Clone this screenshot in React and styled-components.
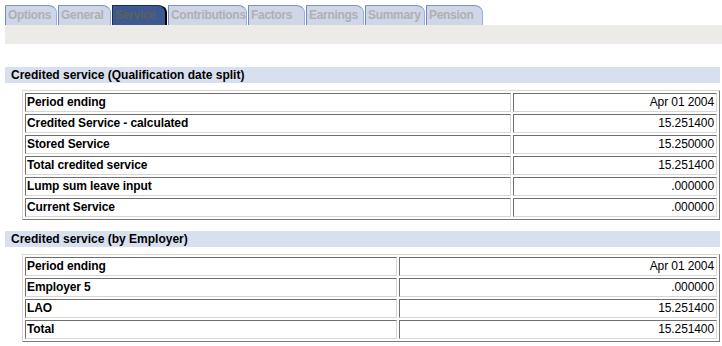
import React from "react";
import styled, { createGlobalStyle } from "styled-components";

const Global = createGlobalStyle`
  html, body { margin: 0; padding: 0; background: #fff; }
  body { font-family: Arial, "Liberation Sans", sans-serif; font-size: 12px; color: #000; }
`;

const Page = styled.div`
  width: 722px;
  padding: 4px 0 0 5px;
  box-sizing: border-box;
`;

const TabRow = styled.div`
  display: flex;
  height: 21px;
  align-items: flex-end;
`;

const Tab = styled.div`
  width: ${p => p.$w}px;
  height: 20px;
  box-sizing: border-box;
  padding-left: 2px;
  margin-right: 1px;
  overflow: hidden;
  background: ${p => (p.$active ? "#3c5a90" : "#ced6e8")};
  border-left: 1px solid ${p => (p.$active ? "#1d2d4d" : "#6d88c4")};
  border-top: 1px solid ${p => (p.$active ? "#1d2d4d" : "#7b93c8")};
  border-right: ${p => (p.$active ? "2px solid #000" : "1px solid #9aaedb")};
  border-top-right-radius: 9px 7px;
  color: ${p => (p.$active ? "#5f5f5f" : "#b0b0b0")};
  font-weight: bold;
  font-size: 12px;
  letter-spacing: -0.3px;
  line-height: 19px;
  white-space: nowrap;
`;

const GrayBar = styled.div`
  height: 19px;
  background: #ecebe7;
`;

const SectionHeader = styled.div`
  margin-top: ${p => p.$mt}px;
  width: 715px;
  height: 16px;
  background: #d8dfee;
  font-weight: bold;
  font-size: 12px;
  line-height: 16px;
  padding-left: 6px;
  box-sizing: border-box;
`;

const Table = styled.table`
  margin: 7px 0 0 17px;
  width: 698px;
  border-collapse: separate;
  border-spacing: 2px;
  border-top: 1px solid #d8d6d0;
  border-left: 1px solid #d8d6d0;
  border-right: 1px solid #7a7a7a;
  border-bottom: 1px solid #7a7a7a;
`;

const Cell = styled.td`
  height: 19px;
  padding: 0 2px 0 1px;
  border-top: 1px solid #6e6e6e;
  border-left: 1px solid #6e6e6e;
  border-right: 1px solid #d8d6d0;
  border-bottom: 1px solid #d8d6d0;
  font-size: 12px;
  line-height: 17px;
  letter-spacing: -0.1px;
  font-weight: ${p => (p.$label ? "bold" : "normal")};
  text-align: ${p => (p.$label ? "left" : "right")};
  width: ${p => p.$w}px;
  box-sizing: border-box;
`;

const tabs = [
  ["Options", 52],
  ["General", 53],
  ["Service", 55],
  ["Contributions", 79],
  ["Factors", 57],
  ["Earnings", 58],
  ["Summary", 60],
  ["Pension", 57],
];

const qual = [
  ["Period ending", "Apr 01 2004"],
  ["Credited Service - calculated", "15.251400"],
  ["Stored Service", "15.250000"],
  ["Total credited service", "15.251400"],
  ["Lump sum leave input", ".000000"],
  ["Current Service", ".000000"],
];

const emp = [
  ["Period ending", "Apr 01 2004"],
  ["Employer 5", ".000000"],
  ["LAO", "15.251400"],
  ["Total", "15.251400"],
];

function DataTable({ rows, labelWidth }) {
  return (
    <Table>
      <tbody>
        {rows.map(([l, v]) => (
          <tr key={l}>
            <Cell $label $w={labelWidth}>{l}</Cell>
            <Cell>{v}</Cell>
          </tr>
        ))}
      </tbody>
    </Table>
  );
}

export default function App() {
  return (
    <Page>
      <Global />
      <TabRow>
        {tabs.map(([t, w]) => (
          <Tab key={t} $active={t === "Service"} $w={w}>{t}</Tab>
        ))}
      </TabRow>
      <GrayBar />
      <SectionHeader $mt={23}>Credited service (Qualification date split)</SectionHeader>
      <DataTable rows={qual} labelWidth={486} />
      <SectionHeader $mt={11}>Credited service (by Employer)</SectionHeader>
      <DataTable rows={emp} labelWidth={372} />
    </Page>
  );
}
